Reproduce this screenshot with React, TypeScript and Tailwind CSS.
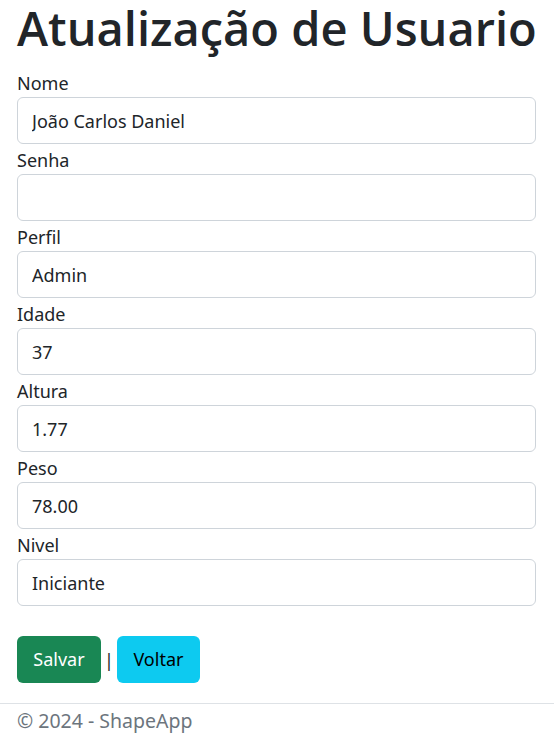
import React from "react";

const fields: { label: string; value: string }[] = [
  { label: "Nome", value: "João Carlos Daniel" },
  { label: "Senha", value: "" },
  { label: "Perfil", value: "Admin" },
  { label: "Idade", value: "37" },
  { label: "Altura", value: "1.77" },
  { label: "Peso", value: "78.00" },
  { label: "Nivel", value: "Iniciante" },
];

export default function App() {
  return (
    <div
      className="min-h-[741px] bg-white text-[#212529]"
      style={{ fontFamily: '"Noto Sans", "Open Sans", sans-serif' }}
    >
      <div className="pl-[17px] pr-[18px]">
        <div className="flex h-[72px] flex-col">
          <h1
            className="m-0 whitespace-nowrap text-[47px] leading-[56px] font-semibold"
            style={{ fontFamily: '"Open Sans", "Noto Sans", sans-serif' }}
          >
            Atualização de Usuario
          </h1>
        </div>
        <form className="flex flex-col">
          {fields.map((f) => (
            <div key={f.label} className="flex flex-col">
              <label className="block h-[22px] mb-[3px] text-[18px] leading-[22px]">{f.label}</label>
              <input
                readOnly
                type="text"
                value={f.value}
                className="block w-full h-[47px] rounded-[6px] border border-[#ced4da] bg-white px-[14px] text-[18px] text-[#212529] outline-none mb-[5px]"
              />
            </div>
          ))}
          <div className="mt-[25px] flex items-center">
            <button
              type="button"
              className="h-[47px] w-[84px] rounded-[6px] bg-[#198754] text-[18px] text-white"
            >
              Salvar
            </button>
            <span className="mx-[3px] text-[18px] leading-none">|</span>
            <button
              type="button"
              className="h-[47px] w-[83px] rounded-[6px] bg-[#0dcaf0] text-[18px] text-black"
            >
              Voltar
            </button>
          </div>
        </form>
      </div>
      <footer className="mt-[20px] border-t border-[#dee2e6] pl-[17px] pt-[3px] text-[19.5px] leading-[27px] text-[#6c757d]">
        © 2024 - ShapeApp
      </footer>
    </div>
  );
}
